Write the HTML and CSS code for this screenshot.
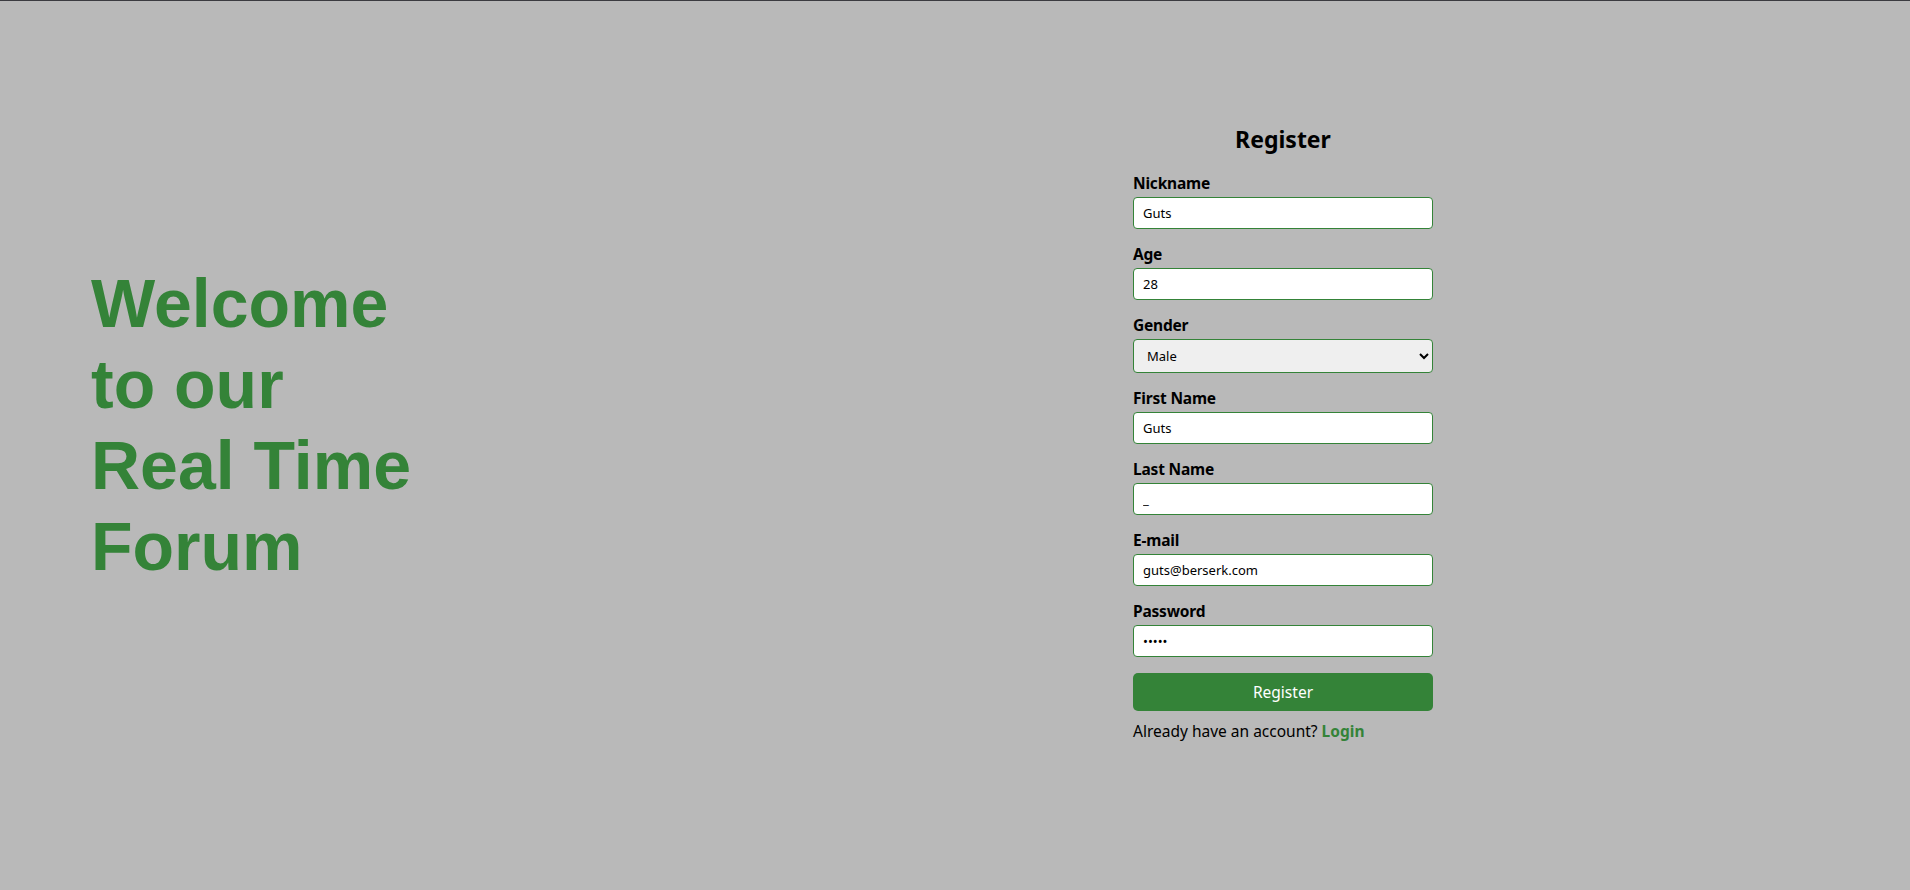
FILE: index.html
```html
<!DOCTYPE html>
<html lang="en">
<head>
<meta charset="utf-8">
<title>Real Time Forum - Register</title>
<link rel="stylesheet" href="styles.css">
</head>
<body>
<main class="page">
  <section class="welcome">
    <h1 class="welcome-title">Welcome<br>to our<br>Real Time<br>Forum</h1>
  </section>
  <section class="auth">
    <form class="register-form" onsubmit="return false;">
      <h2 class="form-title">Register</h2>
      <div class="field">
        <label class="field-label" for="nickname">Nickname</label>
        <input class="field-input" id="nickname" type="text" value="Guts">
      </div>
      <div class="field">
        <label class="field-label" for="age">Age</label>
        <input class="field-input" id="age" type="text" value="28">
      </div>
      <div class="field">
        <label class="field-label" for="gender">Gender</label>
        <select class="field-select" id="gender">
          <option selected>Male</option>
          <option>Female</option>
        </select>
      </div>
      <div class="field">
        <label class="field-label" for="first">First Name</label>
        <input class="field-input" id="first" type="text" value="Guts">
      </div>
      <div class="field">
        <label class="field-label" for="last">Last Name</label>
        <input class="field-input" id="last" type="text" value="_">
      </div>
      <div class="field">
        <label class="field-label" for="email">E-mail</label>
        <input class="field-input" id="email" type="text" value="guts@berserk.com">
      </div>
      <div class="field">
        <label class="field-label" for="password">Password</label>
        <input class="field-input" id="password" type="password" value="guts1">
      </div>
      <button class="submit-btn" type="submit">Register</button>
      <p class="switch">Already have an account? <a class="switch-link" href="#">Login</a></p>
    </form>
  </section>
</main>
</body>
</html>
```

FILE: styles.css
```css
* { box-sizing: border-box; }

html, body {
  margin: 0;
  padding: 0;
  height: 100%;
}

body {
  background: #b9b9b9;
  border-top: 1px solid #3b3b40;
  font-family: "Noto Sans", "DejaVu Sans", sans-serif;
  color: #000;
}

.page {
  display: flex;
  align-items: flex-start;
  height: 889px;
  padding-left: 91px;
}

.welcome {
  width: 1042px;
  padding-top: 262px;
}

.welcome-title {
  margin: 0;
  font-family: "Liberation Sans", Arial, sans-serif;
  font-size: 68px;
  line-height: 81px;
  font-weight: 700;
  color: #348338;
}

.auth {
  width: 300px;
  padding-top: 121px;
}

.register-form {
  display: flex;
  flex-direction: column;
}

.form-title {
  margin: 0 0 17px;
  font-size: 23px;
  line-height: 34px;
  font-weight: 700;
  text-align: center;
}

.field {
  display: flex;
  flex-direction: column;
  margin-bottom: 15px;
}

.field-label {
  font-size: 15.5px;
  line-height: 20px;
  font-weight: 700;
  letter-spacing: -0.2px;
  margin-bottom: 4px;
}

.field-input,
.field-select {
  width: 300px;
  height: 32px;
  border: 1px solid #348338;
  border-radius: 4px;
  padding: 0 9px;
  font-family: "Noto Sans", "DejaVu Sans", sans-serif;
  font-size: 13px;
  color: #000;
  background: #fff;
  outline: none;
}

.field-select {
  height: 34px;
  padding: 0 9px;
  background: #efefef;
}

.submit-btn {
  margin-top: 1px;
  height: 38px;
  border: none;
  border-radius: 5px;
  background: #348338;
  color: #fff;
  font-family: "Noto Sans", "DejaVu Sans", sans-serif;
  font-size: 15.5px;
  cursor: pointer;
}

.switch {
  margin: 10px 0 0;
  font-size: 15.5px;
  line-height: 20px;
}

.switch-link {
  color: #348338;
  font-weight: 700;
  text-decoration: none;
}
```
